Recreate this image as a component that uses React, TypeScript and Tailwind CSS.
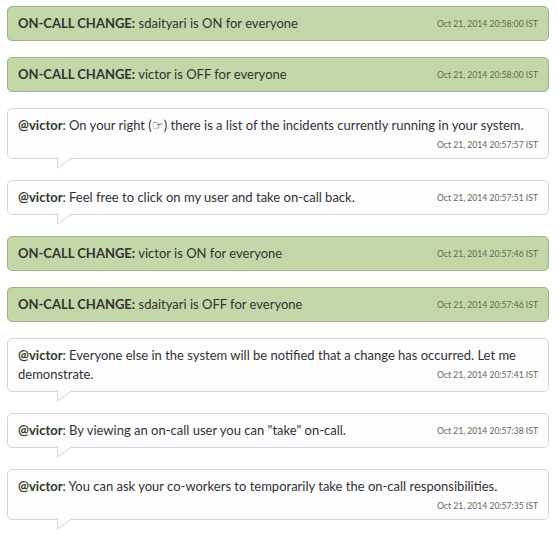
import React from 'react';

type Item =
  | { kind: 'change'; text: string; time: string }
  | { kind: 'msg'; user: string; text: string; time: string };

const items: Item[] = [
  { kind: 'change', text: 'sdaityari is ON for everyone', time: 'Oct 21, 2014 20:58:00 IST' },
  { kind: 'change', text: 'victor is OFF for everyone', time: 'Oct 21, 2014 20:58:00 IST' },
  {
    kind: 'msg',
    user: '@victor',
    text: 'On your right (\u261E) there is a list of the incidents currently running in your system.',
    time: 'Oct 21, 2014 20:57:57 IST',
  },
  { kind: 'msg', user: '@victor', text: 'Feel free to click on my user and take on-call back.', time: 'Oct 21, 2014 20:57:51 IST' },
  { kind: 'change', text: 'victor is ON for everyone', time: 'Oct 21, 2014 20:57:46 IST' },
  { kind: 'change', text: 'sdaityari is OFF for everyone', time: 'Oct 21, 2014 20:57:46 IST' },
  {
    kind: 'msg',
    user: '@victor',
    text: 'Everyone else in the system will be notified that a change has occurred. Let me demonstrate.',
    time: 'Oct 21, 2014 20:57:41 IST',
  },
  { kind: 'msg', user: '@victor', text: 'By viewing an on-call user you can "take" on-call.', time: 'Oct 21, 2014 20:57:38 IST' },
  {
    kind: 'msg',
    user: '@victor',
    text: 'You can ask your co-workers to temporarily take the on-call responsibilities.',
    time: 'Oct 21, 2014 20:57:35 IST',
  },
];

// timestamp floats right: stays on the last line when there is room, wraps below otherwise
const Time = ({ time }: { time: string }) => (
  <span className="relative top-[2px] float-right ml-2 text-[8.6px] leading-[16px] text-[#5c6a50]">{time}</span>
);

// little speech-bubble tail under the message boxes
const Tail = () => (
  <svg className="absolute left-[49px] top-full -mt-px" width="17" height="12" viewBox="0 0 17 12">
    <polygon points="0.5,0 0.5,11 16,0" fill="#fdfcfe" />
    <path d="M0.5 0 L0.5 11 L16 0" fill="none" stroke="#d6d6d6" strokeWidth="1" />
  </svg>
);

export default function App() {
  return (
    <div className="min-h-screen bg-white pt-[6px] pl-[7px] pr-[8px] font-['Lato','Liberation_Sans',sans-serif] text-[13px] leading-[19px] text-[#333]">
      {items.map((it, i) =>
        it.kind === 'change' ? (
          <div
            key={i}
            className="flow-root mb-[16px] rounded-[5px] border border-[#9db385] bg-[#c4d7a9] px-[10px] py-[7px]"
          >
            <span className="font-bold">ON-CALL CHANGE:</span> {it.text}
            <Time time={it.time} />
          </div>
        ) : (
          <div
            key={i}
            className="relative flow-root mb-[21px] rounded-[5px] border border-[#d6d6d6] bg-[#fdfcfe] px-[10px] py-[7px]"
          >
            <span className="font-bold text-[#2f3a26]">{it.user}</span>: {it.text}
            <Time time={it.time} />
            <Tail />
          </div>
        )
      )}
    </div>
  );
}
